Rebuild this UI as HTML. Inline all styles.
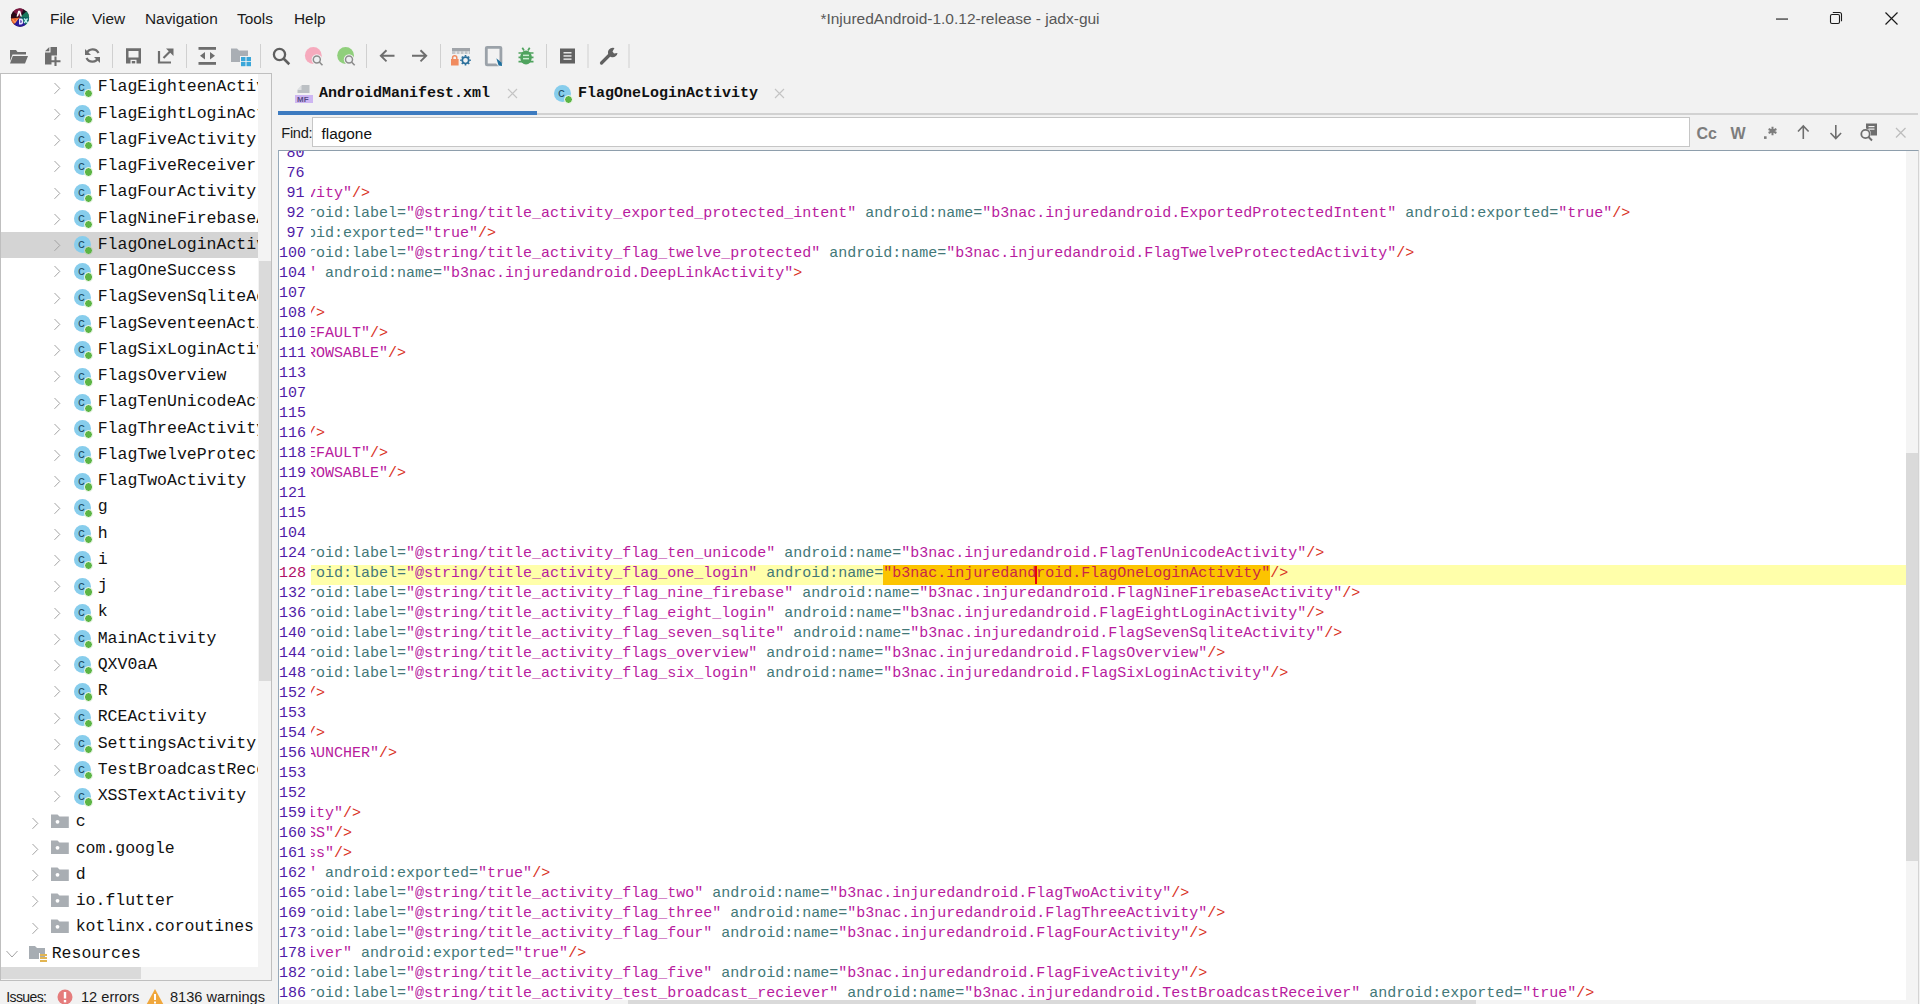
<!DOCTYPE html>
<html><head><meta charset="utf-8"><title>jadx-gui</title>
<style>
*{margin:0;padding:0;box-sizing:border-box}
html,body{width:1920px;height:1004px;overflow:hidden;background:#f2f2f2;font-family:"Liberation Sans",sans-serif;color:#1a1a1a}
.abs{position:absolute}
/* title bar */
#title{position:absolute;left:0;top:0;width:1920px;height:37px;background:#f2f2f2}
.menu{position:absolute;top:10px;font-size:15.4px;color:#1b1b1b;line-height:17px;white-space:nowrap}
#wtitle{position:absolute;top:10px;left:0;width:1920px;text-align:center;font-size:15.5px;color:#585858;line-height:17px}
/* toolbar */
.tb{position:absolute;top:44px}
.sep{position:absolute;top:44px;width:1px;height:24px;background:#cfcfcf}
/* tree */
#tree{position:absolute;left:0;top:73px;width:272px;height:908px;border:1px solid #bfbfbf;background:#fff;overflow:hidden}
#treein{position:absolute;left:0;top:0;width:257px;height:893px;overflow:hidden;background:#fff}
.row{position:absolute;left:0;width:257px;height:26.25px}
.row.sel{background:#d4d4d4}
.chev{position:absolute;top:6px}
.cico{position:absolute;top:4.3px;width:19px;height:19px;margin-left:-0.5px}
.cico b{position:absolute;left:0;top:0;width:17px;height:17px;border-radius:50%;background:#87cdec;color:#24506a;font:normal 13.5px/15.5px "Liberation Sans",sans-serif;text-align:center;font-weight:normal;padding-right:1.5px}
.cico em{position:absolute;left:10.1px;top:9.9px;width:9.3px;height:9.3px;border-radius:50%;background:#5db545;border:1px solid #fff}
.sel .cico em{border-color:#d4d4d4}
.pico{position:absolute;top:5px}
.tn{position:absolute;top:-0.2px;margin-left:-0.3px;font-family:"Liberation Mono",monospace;font-size:16.5px;line-height:26px;color:#111;white-space:nowrap}
#tvs{position:absolute;left:257px;top:0;width:13px;height:893px;background:#f3f3f3}
#tvs i{position:absolute;left:1px;top:187px;width:12px;height:420px;background:#dadada}
#ths{position:absolute;left:0;top:893px;width:257px;height:13px;background:#f3f3f3}
#ths i{position:absolute;left:0;top:0;width:140px;height:12px;background:#dadada}
#tcorner{position:absolute;left:257px;top:893px;width:13px;height:13px;background:#f3f3f3}
/* tabs */
.tab{position:absolute;top:83.5px;font-family:"Liberation Mono",monospace;font-weight:bold;font-size:15px;line-height:20px;color:#111;white-space:nowrap}
.tclose{position:absolute;top:88px}
#tabline{position:absolute;left:537px;top:113px;width:1381px;height:2px;background:#d2d2d2}
#tabsel{position:absolute;left:278px;top:111px;width:259px;height:4px;background:#3d7bc0}
/* find bar */
#findlbl{position:absolute;left:281.3px;top:124.8px;letter-spacing:-0.3px;font-size:14.6px;line-height:17px;color:#1b1b1b}
#findin{position:absolute;left:312px;top:117px;width:1378px;height:30px;background:#fff;border:1px solid #c6c6c6}
#findin span{position:absolute;left:8.5px;top:7.2px;font-size:15.4px;line-height:17px;color:#111}
.fi{position:absolute;top:124px}
/* code */
#code{position:absolute;left:278px;top:150px;width:1641px;height:860px;border:1px solid #d4d4d4;border-top-color:#8e9eac;border-left-color:#97aabb;background:#fff;overflow:hidden}
#gut{position:absolute;left:0;top:0;width:31px;height:860px;overflow:hidden}
.ln{position:absolute;left:0;width:25.5px;height:20px;margin-top:-1.5px;text-align:right;font-family:"Liberation Mono",monospace;font-size:15px;line-height:20px;color:#4f1aa6;white-space:nowrap}
.ln.cur{color:#b01068}
#txt{position:absolute;left:32px;top:0;width:1595px;height:860px;overflow:hidden}
.cl{position:absolute;left:0;width:1595px;height:20px}
.tx{position:absolute;left:-3.95px;top:-1.5px;width:1700px;height:20px;font-family:"Liberation Mono",monospace;font-size:15px;line-height:20px;white-space:pre}
.mbg{position:absolute;top:0;height:20px;background:#fcc400}
.caret{position:absolute;top:1px;width:2px;height:18px;background:#e8000b;z-index:2}
.cl.cur{background:#ffffaa}
.a{color:#437878}
.s{color:#b81b9e}
.d{color:#d9321f}
.m{color:#c92646}
#vs{position:absolute;left:1627px;top:0;width:13px;height:860px;background:#f4f4f4}
#vs i{position:absolute;left:0;top:302px;width:12px;height:408px;background:#dadada}
#hs{position:absolute;left:0;top:849px;width:1627px;height:12px;background:#f4f4f4}
#hs i{position:absolute;left:349px;top:0;width:848px;height:12px;background:#dadada}
/* status */
#status{position:absolute;left:0;top:981px;width:278px;height:23px;background:#f2f2f2}
.st{position:absolute;top:8.3px;font-size:14.6px;line-height:17px;color:#1b1b1b;white-space:nowrap}

</style></head>
<body>
<div id="title">
  <svg class="abs" style="left:10px;top:8px" width="20" height="20" viewBox="0 0 20 20">
    <circle cx="10" cy="9.6" r="9.1" fill="#1c0f1e"/>
    <path d="M10 9.6 L3 3.5 A9.1 9.1 0 0 1 13.5 1.2 Z" fill="#7a1840"/>
    <path d="M10 9.6 L1 10.5 A9.1 9.1 0 0 1 3 3.5 Z" fill="#2a0a18"/>
    <path d="M10 9.6 L4 16.2 A9.1 9.1 0 0 1 1 10.5 Z" fill="#e8622a"/>
    <path d="M10 9.6 L16.5 3.3 A9.1 9.1 0 0 1 19 9 Z" fill="#17795c"/>
    <path d="M10 9.6 L19 9 A9.1 9.1 0 0 1 15.5 17 Z" fill="#0e6e6a"/>
    <path d="M10 9.6 L15.5 17 A9.1 9.1 0 0 1 4 16.2 Z" fill="#2a1a9a"/>
    <path d="M8.2 2.8 L10.2 2.8 L12 8.5 L10.5 8.5 L9.3 5 L8 8.5 L6.5 8.5 Z" fill="#fff"/>
    <path d="M9 10.5 H11 Q13.2 10.5 13.2 13.5 Q13.2 16.5 11 16.5 H9 Z M10.4 12 V15 Q11.7 15 11.7 13.5 Q11.7 12 10.4 12 Z" fill="#e9e3ff" fill-rule="evenodd"/>
    <path d="M14.2 10.5 L17.5 15 M17.5 10.5 L14.2 15" stroke="#bff5ef" stroke-width="1.3"/>
    <path d="M2.5 11 L5 14.5 L7.5 11" fill="none" stroke="#ff9a60" stroke-width="1.2"/>
  </svg>
  <div class="menu" style="left:50px">File</div>
  <div class="menu" style="left:92px">View</div>
  <div class="menu" style="left:145px">Navigation</div>
  <div class="menu" style="left:237px">Tools</div>
  <div class="menu" style="left:294px">Help</div>
  <div id="wtitle">*InjuredAndroid-1.0.12-release - jadx-gui</div>
  <svg class="abs" style="left:1775px;top:12px" width="14" height="14" viewBox="0 0 14 14"><rect x="1" y="6.5" width="12" height="1.1" fill="#1a1a1a"/></svg>
  <svg class="abs" style="left:1829px;top:11px" width="14" height="14" viewBox="0 0 14 14"><rect x="1.5" y="3.5" width="9" height="9" rx="1.5" fill="none" stroke="#1a1a1a" stroke-width="1.1"/><path d="M3.8 1.5 H10.5 Q12.5 1.5 12.5 3.5 V10.2" fill="none" stroke="#1a1a1a" stroke-width="1.1"/></svg>
  <svg class="abs" style="left:1884px;top:11px" width="15" height="15" viewBox="0 0 15 15"><path d="M1.5 1.5 L13.5 13.5 M13.5 1.5 L1.5 13.5" stroke="#1a1a1a" stroke-width="1.2"/></svg>
</div>

<!-- toolbar -->
<svg class="abs" style="left:0;top:40px" width="640" height="32" viewBox="0 40 640 32">
  <!-- open folder -->
  <path d="M10 50 H16 L17.5 52 H26 V54.5 H12.5 L10 61 Z" fill="#6e6e6e"/>
  <path d="M12.8 56 H28 L25 63.5 H10 Z" fill="#6e6e6e"/>
  <!-- add file -->
  <path d="M50.5 47 H57 V55.5 H51.5 V64.5 H45 V52.5 H50.5 Z" fill="#6e6e6e"/>
  <path d="M45 51.3 L49.3 47 V51.3 Z" fill="#6e6e6e"/>
  <path d="M55.5 56.5 V66 M50.8 61.2 H60.5" stroke="#6e6e6e" stroke-width="2.1"/>
  <rect x="71" y="44" width="1" height="24" fill="#d0d0d0"/>
  <!-- sync -->
  <path d="M98.5 53 A6.5 6.5 0 0 0 86.6 53.5" fill="none" stroke="#6e6e6e" stroke-width="2.2"/>
  <path d="M85 49 L85 55 L91 55 Z" fill="#6e6e6e"/>
  <path d="M86.5 58 A6.5 6.5 0 0 0 98.4 57.5" fill="none" stroke="#6e6e6e" stroke-width="2.2"/>
  <path d="M100 63 L100 57 L94 57 Z" fill="#6e6e6e"/>
  <rect x="112" y="44" width="1" height="24" fill="#d0d0d0"/>
  <!-- save -->
  <path d="M126 48.2 H141 V63.4 H126 Z M128.5 51 V57.5 H138.5 V51 Z M130.5 59.8 V63.4 H136.5 V59.8 Z" fill="#6e6e6e" fill-rule="evenodd"/>
  <rect x="131.8" y="61" width="3.4" height="2.4" fill="#6e6e6e"/>
  <!-- export -->
  <path d="M159 51 V62.5 H171" fill="none" stroke="#6e6e6e" stroke-width="2.2"/>
  <path d="M163.5 58 L171 50.5" stroke="#6e6e6e" stroke-width="2.2"/>
  <path d="M166 48.5 H173.5 V56 Z" fill="#6e6e6e"/>
  <rect x="186" y="44" width="1" height="24" fill="#d0d0d0"/>
  <!-- unfold -->
  <rect x="198.5" y="47" width="17.5" height="2.8" fill="#6e6e6e"/>
  <rect x="198.5" y="62" width="17.5" height="2.8" fill="#6e6e6e"/>
  <path d="M205 52 V59.5 L200 55.8 Z M210 52 V59.5 L215 55.8 Z" fill="#6e6e6e"/>
  <!-- folder grid -->
  <path d="M231 48.5 H237 L239 50.5 H248 V62 H231 Z" fill="#a9aeb4"/>
  <rect x="240" y="56" width="12" height="11" fill="#f2f2f2"/>
  <rect x="241" y="57" width="4.5" height="4.2" fill="#3aa6d9"/><rect x="246.5" y="57" width="4.5" height="4.2" fill="#3aa6d9"/>
  <rect x="241" y="62" width="4.5" height="4.2" fill="#3aa6d9"/><rect x="246.5" y="62" width="4.5" height="4.2" fill="#3aa6d9"/>
  <rect x="260" y="44" width="1" height="24" fill="#d0d0d0"/>
  <!-- search -->
  <circle cx="279.5" cy="54.5" r="5.6" fill="none" stroke="#5f5f5f" stroke-width="2.3"/>
  <path d="M283.5 58.5 L289.3 64.2" stroke="#5f5f5f" stroke-width="2.6"/>
  <!-- pink -->
  <circle cx="313.3" cy="55.5" r="8.4" fill="#f6aabd"/>
  <circle cx="316.8" cy="59.5" r="5.2" fill="#f2f2f2"/>
  <circle cx="316.8" cy="59.5" r="3.5" fill="#eef0f2" stroke="#8c8c8c" stroke-width="1.5"/>
  <path d="M319.3 62 L322.5 65.2" stroke="#8c8c8c" stroke-width="1.6"/>
  <!-- green -->
  <circle cx="345.6" cy="55.5" r="8.4" fill="#90cf7c"/>
  <circle cx="349" cy="59.5" r="5.2" fill="#f2f2f2"/>
  <circle cx="349" cy="59.5" r="3.5" fill="#eef0f2" stroke="#8c8c8c" stroke-width="1.5"/>
  <path d="M351.5 62 L354.7 65.2" stroke="#8c8c8c" stroke-width="1.6"/>
  <rect x="366" y="44" width="1" height="24" fill="#d0d0d0"/>
  <!-- back / fwd -->
  <path d="M380.8 55.8 H394.5 M386.5 50.2 L380.8 55.8 L386.5 61.4" fill="none" stroke="#6e6e6e" stroke-width="1.9"/>
  <path d="M412 55.8 H426.2 M420.5 50.2 L426.2 55.8 L420.5 61.4" fill="none" stroke="#6e6e6e" stroke-width="1.9"/>
  <rect x="440" y="44" width="1" height="24" fill="#d0d0d0"/>
  <!-- lock gear -->
  <rect x="452" y="48" width="18" height="3" fill="#a0a4a9"/>
  <rect x="452" y="51" width="18" height="3" fill="#c3c6c9"/>
  <rect x="455.5" y="51.5" width="1.2" height="2.5" fill="#f2f2f2"/><rect x="459.5" y="51.5" width="1.2" height="2.5" fill="#f2f2f2"/><rect x="463.5" y="51.5" width="1.2" height="2.5" fill="#f2f2f2"/><rect x="467.5" y="51.5" width="1.2" height="2.5" fill="#f2f2f2"/>
  <rect x="450" y="54" width="22" height="13" fill="#f2f2f2"/>
  <path d="M452.6 59.5 V57.8 A2.1 2.1 0 0 1 456.8 57.8 V59.5" fill="none" stroke="#f08b5f" stroke-width="1.5"/>
  <rect x="451" y="59" width="7.6" height="6.5" fill="#f08b5f"/>
  <circle cx="465.5" cy="60.3" r="3.2" fill="none" stroke="#2b6f9b" stroke-width="1.7"/>
  <path d="M465.5 55 V56.5 M465.5 64.1 V65.6 M460.2 60.3 H461.7 M469.3 60.3 H470.8 M461.8 56.6 L462.8 57.6 M468.2 63 L469.2 64 M461.8 64 L462.8 63 M468.2 57.6 L469.2 56.6" stroke="#2b6f9b" stroke-width="1.6"/>
  <!-- tablet -->
  <rect x="486.3" y="47.3" width="14.6" height="17.6" rx="0.8" fill="none" stroke="#9ba2a9" stroke-width="2.8"/>
  <path d="M495.5 57.5 L503 64 L503 67 L499 67 L495.5 62.5 Z" fill="#f2f2f2"/>
  <path d="M496.3 58.3 L501.8 62.8 L502 66 L498.6 65.6 Z" fill="#1f6f9c"/>
  <!-- bug -->
  <ellipse cx="526" cy="57.5" rx="5.8" ry="7" fill="#4fa35e"/>
  <path d="M518.5 53 H533.5 M518.5 57.3 H533.5 M518.5 61.6 H533.5 M522.3 47.8 L524 50.5 M529.7 47.8 L528 50.5" stroke="#4fa35e" stroke-width="1.7"/>
  <rect x="523" y="54.6" width="6" height="1.5" fill="#c9eccf"/>
  <rect x="523" y="57.9" width="6" height="1.5" fill="#c9eccf"/>
  <rect x="546" y="44" width="1" height="24" fill="#d0d0d0"/>
  <!-- list doc -->
  <rect x="560" y="48.5" width="15" height="15" fill="#616161"/>
  <rect x="563.5" y="52" width="8" height="1.5" fill="#e6e6e6"/>
  <rect x="563.5" y="55.2" width="8" height="1.5" fill="#e6e6e6"/>
  <rect x="563.5" y="58.4" width="8" height="1.5" fill="#e6e6e6"/>
  <rect x="587.5" y="44" width="1" height="24" fill="#d0d0d0"/>
  <!-- wrench -->
  <path d="M601.5 63 L610 54.5" stroke="#616161" stroke-width="3.2" stroke-linecap="round"/>
  <path d="M614.5 48 A4.8 4.8 0 1 0 617.5 53 L614 53.5 L612.5 51.5 Z" fill="#616161"/>
  <rect x="628.5" y="44" width="1" height="24" fill="#d0d0d0"/>
</svg>

<!-- tree -->
<div id="tree">
  <div id="treein">
<div class="row" style="top:0.50px"><svg class="chev" style="left:51px" width="10" height="14" viewBox="0 0 10 14"><path d="M2.5 2 L7.8 7.4 L2.5 12.8" fill="none" stroke="#a3a3a3" stroke-width="1"/></svg><span class="cico" style="left:73px"><b>c</b><em></em></span><span class="tn" style="left:97px">FlagEighteenActivity</span></div>
<div class="row" style="top:26.75px"><svg class="chev" style="left:51px" width="10" height="14" viewBox="0 0 10 14"><path d="M2.5 2 L7.8 7.4 L2.5 12.8" fill="none" stroke="#a3a3a3" stroke-width="1"/></svg><span class="cico" style="left:73px"><b>c</b><em></em></span><span class="tn" style="left:97px">FlagEightLoginActivity</span></div>
<div class="row" style="top:53.00px"><svg class="chev" style="left:51px" width="10" height="14" viewBox="0 0 10 14"><path d="M2.5 2 L7.8 7.4 L2.5 12.8" fill="none" stroke="#a3a3a3" stroke-width="1"/></svg><span class="cico" style="left:73px"><b>c</b><em></em></span><span class="tn" style="left:97px">FlagFiveActivity</span></div>
<div class="row" style="top:79.25px"><svg class="chev" style="left:51px" width="10" height="14" viewBox="0 0 10 14"><path d="M2.5 2 L7.8 7.4 L2.5 12.8" fill="none" stroke="#a3a3a3" stroke-width="1"/></svg><span class="cico" style="left:73px"><b>c</b><em></em></span><span class="tn" style="left:97px">FlagFiveReceiver</span></div>
<div class="row" style="top:105.50px"><svg class="chev" style="left:51px" width="10" height="14" viewBox="0 0 10 14"><path d="M2.5 2 L7.8 7.4 L2.5 12.8" fill="none" stroke="#a3a3a3" stroke-width="1"/></svg><span class="cico" style="left:73px"><b>c</b><em></em></span><span class="tn" style="left:97px">FlagFourActivity</span></div>
<div class="row" style="top:131.75px"><svg class="chev" style="left:51px" width="10" height="14" viewBox="0 0 10 14"><path d="M2.5 2 L7.8 7.4 L2.5 12.8" fill="none" stroke="#a3a3a3" stroke-width="1"/></svg><span class="cico" style="left:73px"><b>c</b><em></em></span><span class="tn" style="left:97px">FlagNineFirebaseActivity</span></div>
<div class="row sel" style="top:158.00px"><svg class="chev" style="left:51px" width="10" height="14" viewBox="0 0 10 14"><path d="M2.5 2 L7.8 7.4 L2.5 12.8" fill="none" stroke="#a3a3a3" stroke-width="1"/></svg><span class="cico" style="left:73px"><b>c</b><em></em></span><span class="tn" style="left:97px">FlagOneLoginActivity</span></div>
<div class="row" style="top:184.25px"><svg class="chev" style="left:51px" width="10" height="14" viewBox="0 0 10 14"><path d="M2.5 2 L7.8 7.4 L2.5 12.8" fill="none" stroke="#a3a3a3" stroke-width="1"/></svg><span class="cico" style="left:73px"><b>c</b><em></em></span><span class="tn" style="left:97px">FlagOneSuccess</span></div>
<div class="row" style="top:210.50px"><svg class="chev" style="left:51px" width="10" height="14" viewBox="0 0 10 14"><path d="M2.5 2 L7.8 7.4 L2.5 12.8" fill="none" stroke="#a3a3a3" stroke-width="1"/></svg><span class="cico" style="left:73px"><b>c</b><em></em></span><span class="tn" style="left:97px">FlagSevenSqliteActivity</span></div>
<div class="row" style="top:236.75px"><svg class="chev" style="left:51px" width="10" height="14" viewBox="0 0 10 14"><path d="M2.5 2 L7.8 7.4 L2.5 12.8" fill="none" stroke="#a3a3a3" stroke-width="1"/></svg><span class="cico" style="left:73px"><b>c</b><em></em></span><span class="tn" style="left:97px">FlagSeventeenActivity</span></div>
<div class="row" style="top:263.00px"><svg class="chev" style="left:51px" width="10" height="14" viewBox="0 0 10 14"><path d="M2.5 2 L7.8 7.4 L2.5 12.8" fill="none" stroke="#a3a3a3" stroke-width="1"/></svg><span class="cico" style="left:73px"><b>c</b><em></em></span><span class="tn" style="left:97px">FlagSixLoginActivity</span></div>
<div class="row" style="top:289.25px"><svg class="chev" style="left:51px" width="10" height="14" viewBox="0 0 10 14"><path d="M2.5 2 L7.8 7.4 L2.5 12.8" fill="none" stroke="#a3a3a3" stroke-width="1"/></svg><span class="cico" style="left:73px"><b>c</b><em></em></span><span class="tn" style="left:97px">FlagsOverview</span></div>
<div class="row" style="top:315.50px"><svg class="chev" style="left:51px" width="10" height="14" viewBox="0 0 10 14"><path d="M2.5 2 L7.8 7.4 L2.5 12.8" fill="none" stroke="#a3a3a3" stroke-width="1"/></svg><span class="cico" style="left:73px"><b>c</b><em></em></span><span class="tn" style="left:97px">FlagTenUnicodeActivity</span></div>
<div class="row" style="top:341.75px"><svg class="chev" style="left:51px" width="10" height="14" viewBox="0 0 10 14"><path d="M2.5 2 L7.8 7.4 L2.5 12.8" fill="none" stroke="#a3a3a3" stroke-width="1"/></svg><span class="cico" style="left:73px"><b>c</b><em></em></span><span class="tn" style="left:97px">FlagThreeActivity</span></div>
<div class="row" style="top:368.00px"><svg class="chev" style="left:51px" width="10" height="14" viewBox="0 0 10 14"><path d="M2.5 2 L7.8 7.4 L2.5 12.8" fill="none" stroke="#a3a3a3" stroke-width="1"/></svg><span class="cico" style="left:73px"><b>c</b><em></em></span><span class="tn" style="left:97px">FlagTwelveProtectedActivity</span></div>
<div class="row" style="top:394.25px"><svg class="chev" style="left:51px" width="10" height="14" viewBox="0 0 10 14"><path d="M2.5 2 L7.8 7.4 L2.5 12.8" fill="none" stroke="#a3a3a3" stroke-width="1"/></svg><span class="cico" style="left:73px"><b>c</b><em></em></span><span class="tn" style="left:97px">FlagTwoActivity</span></div>
<div class="row" style="top:420.50px"><svg class="chev" style="left:51px" width="10" height="14" viewBox="0 0 10 14"><path d="M2.5 2 L7.8 7.4 L2.5 12.8" fill="none" stroke="#a3a3a3" stroke-width="1"/></svg><span class="cico" style="left:73px"><b>c</b><em></em></span><span class="tn" style="left:97px">g</span></div>
<div class="row" style="top:446.75px"><svg class="chev" style="left:51px" width="10" height="14" viewBox="0 0 10 14"><path d="M2.5 2 L7.8 7.4 L2.5 12.8" fill="none" stroke="#a3a3a3" stroke-width="1"/></svg><span class="cico" style="left:73px"><b>c</b><em></em></span><span class="tn" style="left:97px">h</span></div>
<div class="row" style="top:473.00px"><svg class="chev" style="left:51px" width="10" height="14" viewBox="0 0 10 14"><path d="M2.5 2 L7.8 7.4 L2.5 12.8" fill="none" stroke="#a3a3a3" stroke-width="1"/></svg><span class="cico" style="left:73px"><b>c</b><em></em></span><span class="tn" style="left:97px">i</span></div>
<div class="row" style="top:499.25px"><svg class="chev" style="left:51px" width="10" height="14" viewBox="0 0 10 14"><path d="M2.5 2 L7.8 7.4 L2.5 12.8" fill="none" stroke="#a3a3a3" stroke-width="1"/></svg><span class="cico" style="left:73px"><b>c</b><em></em></span><span class="tn" style="left:97px">j</span></div>
<div class="row" style="top:525.50px"><svg class="chev" style="left:51px" width="10" height="14" viewBox="0 0 10 14"><path d="M2.5 2 L7.8 7.4 L2.5 12.8" fill="none" stroke="#a3a3a3" stroke-width="1"/></svg><span class="cico" style="left:73px"><b>c</b><em></em></span><span class="tn" style="left:97px">k</span></div>
<div class="row" style="top:551.75px"><svg class="chev" style="left:51px" width="10" height="14" viewBox="0 0 10 14"><path d="M2.5 2 L7.8 7.4 L2.5 12.8" fill="none" stroke="#a3a3a3" stroke-width="1"/></svg><span class="cico" style="left:73px"><b>c</b><em></em></span><span class="tn" style="left:97px">MainActivity</span></div>
<div class="row" style="top:578.00px"><svg class="chev" style="left:51px" width="10" height="14" viewBox="0 0 10 14"><path d="M2.5 2 L7.8 7.4 L2.5 12.8" fill="none" stroke="#a3a3a3" stroke-width="1"/></svg><span class="cico" style="left:73px"><b>c</b><em></em></span><span class="tn" style="left:97px">QXV0aA</span></div>
<div class="row" style="top:604.25px"><svg class="chev" style="left:51px" width="10" height="14" viewBox="0 0 10 14"><path d="M2.5 2 L7.8 7.4 L2.5 12.8" fill="none" stroke="#a3a3a3" stroke-width="1"/></svg><span class="cico" style="left:73px"><b>c</b><em></em></span><span class="tn" style="left:97px">R</span></div>
<div class="row" style="top:630.50px"><svg class="chev" style="left:51px" width="10" height="14" viewBox="0 0 10 14"><path d="M2.5 2 L7.8 7.4 L2.5 12.8" fill="none" stroke="#a3a3a3" stroke-width="1"/></svg><span class="cico" style="left:73px"><b>c</b><em></em></span><span class="tn" style="left:97px">RCEActivity</span></div>
<div class="row" style="top:656.75px"><svg class="chev" style="left:51px" width="10" height="14" viewBox="0 0 10 14"><path d="M2.5 2 L7.8 7.4 L2.5 12.8" fill="none" stroke="#a3a3a3" stroke-width="1"/></svg><span class="cico" style="left:73px"><b>c</b><em></em></span><span class="tn" style="left:97px">SettingsActivity</span></div>
<div class="row" style="top:683.00px"><svg class="chev" style="left:51px" width="10" height="14" viewBox="0 0 10 14"><path d="M2.5 2 L7.8 7.4 L2.5 12.8" fill="none" stroke="#a3a3a3" stroke-width="1"/></svg><span class="cico" style="left:73px"><b>c</b><em></em></span><span class="tn" style="left:97px">TestBroadcastReceiver</span></div>
<div class="row" style="top:709.25px"><svg class="chev" style="left:51px" width="10" height="14" viewBox="0 0 10 14"><path d="M2.5 2 L7.8 7.4 L2.5 12.8" fill="none" stroke="#a3a3a3" stroke-width="1"/></svg><span class="cico" style="left:73px"><b>c</b><em></em></span><span class="tn" style="left:97px">XSSTextActivity</span></div>
<div class="row" style="top:735.50px"><svg class="chev" style="left:29px" width="10" height="14" viewBox="0 0 10 14"><path d="M2.5 2 L7.8 7.4 L2.5 12.8" fill="none" stroke="#a3a3a3" stroke-width="1"/></svg><svg class="pico" style="left:49px;top:3.5px" width="20" height="16" viewBox="0 0 20 16"><path d="M1 1.5 H7.5 L9.5 3.5 H18.8 V15 H1 Z" fill="#a9aeb3"/><circle cx="7.5" cy="8.8" r="1.9" fill="#fff"/></svg><span class="tn" style="left:75px">c</span></div>
<div class="row" style="top:761.75px"><svg class="chev" style="left:29px" width="10" height="14" viewBox="0 0 10 14"><path d="M2.5 2 L7.8 7.4 L2.5 12.8" fill="none" stroke="#a3a3a3" stroke-width="1"/></svg><svg class="pico" style="left:49px;top:3.5px" width="20" height="16" viewBox="0 0 20 16"><path d="M1 1.5 H7.5 L9.5 3.5 H18.8 V15 H1 Z" fill="#a9aeb3"/><circle cx="7.5" cy="8.8" r="1.9" fill="#fff"/></svg><span class="tn" style="left:75px">com.google</span></div>
<div class="row" style="top:788.00px"><svg class="chev" style="left:29px" width="10" height="14" viewBox="0 0 10 14"><path d="M2.5 2 L7.8 7.4 L2.5 12.8" fill="none" stroke="#a3a3a3" stroke-width="1"/></svg><svg class="pico" style="left:49px;top:3.5px" width="20" height="16" viewBox="0 0 20 16"><path d="M1 1.5 H7.5 L9.5 3.5 H18.8 V15 H1 Z" fill="#a9aeb3"/><circle cx="7.5" cy="8.8" r="1.9" fill="#fff"/></svg><span class="tn" style="left:75px">d</span></div>
<div class="row" style="top:814.25px"><svg class="chev" style="left:29px" width="10" height="14" viewBox="0 0 10 14"><path d="M2.5 2 L7.8 7.4 L2.5 12.8" fill="none" stroke="#a3a3a3" stroke-width="1"/></svg><svg class="pico" style="left:49px;top:3.5px" width="20" height="16" viewBox="0 0 20 16"><path d="M1 1.5 H7.5 L9.5 3.5 H18.8 V15 H1 Z" fill="#a9aeb3"/><circle cx="7.5" cy="8.8" r="1.9" fill="#fff"/></svg><span class="tn" style="left:75px">io.flutter</span></div>
<div class="row" style="top:840.50px"><svg class="chev" style="left:29px" width="10" height="14" viewBox="0 0 10 14"><path d="M2.5 2 L7.8 7.4 L2.5 12.8" fill="none" stroke="#a3a3a3" stroke-width="1"/></svg><svg class="pico" style="left:49px;top:3.5px" width="20" height="16" viewBox="0 0 20 16"><path d="M1 1.5 H7.5 L9.5 3.5 H18.8 V15 H1 Z" fill="#a9aeb3"/><circle cx="7.5" cy="8.8" r="1.9" fill="#fff"/></svg><span class="tn" style="left:75px">kotlinx.coroutines</span></div>
<div class="row" style="top:866.75px"><svg class="chev" style="left:4px;top:8px" width="14" height="10" viewBox="0 0 14 10"><path d="M1.5 2 L7 8 L12.5 2" fill="none" stroke="#a3a3a3" stroke-width="1"/></svg><svg class="pico" style="left:27px;top:4px" width="22" height="20" viewBox="0 0 22 20"><path d="M1 1 H7 L9 3 H17 V14 H1 Z" fill="#a7adb3"/><rect x="12" y="9" width="7" height="2" fill="#e2b552"/><rect x="12" y="12" width="7" height="2" fill="#e2b552"/><rect x="12" y="15" width="7" height="2" fill="#e2b552"/><rect x="11" y="8" width="1" height="10" fill="#fff"/></svg><span class="tn" style="left:51px">Resources</span></div>
  </div>
  <div id="tvs"><i></i></div>
  <div id="ths"><i></i></div>
  <div id="tcorner"></div>
</div>

<!-- tabs -->
<svg class="abs" style="left:295px;top:84px" width="19" height="20" viewBox="0 0 19 20">
  <path d="M2.5 6 L7 1 H14.5 V9 H2.5 Z" fill="#bcc0c4"/>
  <path d="M2.5 6 L6.5 1.5 V6 Z" fill="#dfe1e3"/>
  <rect x="0" y="11" width="18" height="8" fill="#cdb6f2"/>
  <text x="2" y="18.3" font-family="Liberation Sans" font-weight="bold" font-size="8" fill="#5a4d86">MF</text>
</svg>
<div class="tab" style="left:319px">AndroidManifest.xml</div>
<svg class="tclose" style="left:507px" width="11" height="11" viewBox="0 0 11 11"><path d="M1 1 L10 10 M10 1 L1 10" stroke="#c4c4c4" stroke-width="1.15"/></svg>
<span class="cico" style="left:554px;top:85px"><b>c</b><em></em></span>
<div class="tab" style="left:578px">FlagOneLoginActivity</div>
<svg class="tclose" style="left:774px" width="11" height="11" viewBox="0 0 11 11"><path d="M1 1 L10 10 M10 1 L1 10" stroke="#c4c4c4" stroke-width="1.15"/></svg>
<div id="tabline"></div>
<div id="tabsel"></div>

<!-- find bar -->
<div id="findlbl">Find:</div>
<div id="findin"><span>flagone</span></div>
<svg class="abs" style="left:1690px;top:118px" width="230" height="30" viewBox="1690 118 230 30">
  <text x="1696.5" y="138.5" font-family="Liberation Sans" font-weight="bold" font-size="16" fill="#7d7d7d">Cc</text>
  <text x="1730.5" y="138.5" font-family="Liberation Sans" font-weight="bold" font-size="16" fill="#7d7d7d">W</text>
  <rect x="1764" y="136.3" width="2.6" height="2.6" fill="#7d7d7d"/>
  <path d="M1772.5 126.8 V135.2 M1768.6 129 L1776.4 133 M1768.6 133 L1776.4 129" stroke="#7d7d7d" stroke-width="2"/>
  <path d="M1803.3 139 V126.5 M1798 131.5 L1803.3 126 L1808.6 131.5" fill="none" stroke="#6e6e6e" stroke-width="1.6"/>
  <path d="M1835.8 125 V138.5 M1830.5 133 L1835.8 138.5 L1841.1 133" fill="none" stroke="#6e6e6e" stroke-width="1.6"/>
  <rect x="1866" y="123.5" width="11" height="12" fill="#6e6e6e"/>
  <rect x="1868.5" y="126" width="6" height="1.2" fill="#f2f2f2"/><rect x="1868.5" y="128.5" width="6" height="1.2" fill="#f2f2f2"/>
  <circle cx="1865.5" cy="134" r="5.5" fill="#f2f2f2"/>
  <circle cx="1865.5" cy="134" r="4.2" fill="none" stroke="#6e6e6e" stroke-width="1.8"/>
  <path d="M1868.5 137 L1872 140.5" stroke="#6e6e6e" stroke-width="1.9"/>
  <path d="M1896 128 L1905.5 137.5 M1905.5 128 L1896 137.5" stroke="#bdbdbd" stroke-width="1.3"/>
</svg>

<!-- code -->
<div id="code">
  <div id="gut">
<div class="ln" style="top:-6px">80</div>
<div class="ln" style="top:14px">76</div>
<div class="ln" style="top:34px">91</div>
<div class="ln" style="top:54px">92</div>
<div class="ln" style="top:74px">97</div>
<div class="ln" style="top:94px">100</div>
<div class="ln" style="top:114px">104</div>
<div class="ln" style="top:134px">107</div>
<div class="ln" style="top:154px">108</div>
<div class="ln" style="top:174px">110</div>
<div class="ln" style="top:194px">111</div>
<div class="ln" style="top:214px">113</div>
<div class="ln" style="top:234px">107</div>
<div class="ln" style="top:254px">115</div>
<div class="ln" style="top:274px">116</div>
<div class="ln" style="top:294px">118</div>
<div class="ln" style="top:314px">119</div>
<div class="ln" style="top:334px">121</div>
<div class="ln" style="top:354px">115</div>
<div class="ln" style="top:374px">104</div>
<div class="ln" style="top:394px">124</div>
<div class="ln cur" style="top:414px">128</div>
<div class="ln" style="top:434px">132</div>
<div class="ln" style="top:454px">136</div>
<div class="ln" style="top:474px">140</div>
<div class="ln" style="top:494px">144</div>
<div class="ln" style="top:514px">148</div>
<div class="ln" style="top:534px">152</div>
<div class="ln" style="top:554px">153</div>
<div class="ln" style="top:574px">154</div>
<div class="ln" style="top:594px">156</div>
<div class="ln" style="top:614px">153</div>
<div class="ln" style="top:634px">152</div>
<div class="ln" style="top:654px">159</div>
<div class="ln" style="top:674px">160</div>
<div class="ln" style="top:694px">161</div>
<div class="ln" style="top:714px">162</div>
<div class="ln" style="top:734px">165</div>
<div class="ln" style="top:754px">169</div>
<div class="ln" style="top:774px">173</div>
<div class="ln" style="top:794px">178</div>
<div class="ln" style="top:814px">182</div>
<div class="ln" style="top:834px">186</div>
  </div>
  <div id="txt">
<div class="cl" style="top:-6px"><div class="tx"></div></div>
<div class="cl" style="top:14px"><div class="tx"></div></div>
<div class="cl" style="top:34px"><div class="tx"><span class="s">vity"</span><span class="d">/&gt;</span></div></div>
<div class="cl" style="top:54px"><div class="tx"><span class="a">roid:label=</span><span class="s">"@string/title_activity_exported_protected_intent"</span><span class="a"> android:name=</span><span class="s">"b3nac.injuredandroid.ExportedProtectedIntent"</span><span class="a"> android:exported=</span><span class="s">"true"</span><span class="d">/&gt;</span></div></div>
<div class="cl" style="top:74px"><div class="tx"><span class="a">oid:exported=</span><span class="s">"true"</span><span class="d">/&gt;</span></div></div>
<div class="cl" style="top:94px"><div class="tx"><span class="a">roid:label=</span><span class="s">"@string/title_activity_flag_twelve_protected"</span><span class="a"> android:name=</span><span class="s">"b3nac.injuredandroid.FlagTwelveProtectedActivity"</span><span class="d">/&gt;</span></div></div>
<div class="cl" style="top:114px"><div class="tx"><span class="s">"</span><span class="a"> android:name=</span><span class="s">"b3nac.injuredandroid.DeepLinkActivity"</span><span class="d">&gt;</span></div></div>
<div class="cl" style="top:134px"><div class="tx"></div></div>
<div class="cl" style="top:154px"><div class="tx"><span class="d">/&gt;</span></div></div>
<div class="cl" style="top:174px"><div class="tx"><span class="s">EFAULT"</span><span class="d">/&gt;</span></div></div>
<div class="cl" style="top:194px"><div class="tx"><span class="s">ROWSABLE"</span><span class="d">/&gt;</span></div></div>
<div class="cl" style="top:214px"><div class="tx"></div></div>
<div class="cl" style="top:234px"><div class="tx"></div></div>
<div class="cl" style="top:254px"><div class="tx"></div></div>
<div class="cl" style="top:274px"><div class="tx"><span class="d">/&gt;</span></div></div>
<div class="cl" style="top:294px"><div class="tx"><span class="s">EFAULT"</span><span class="d">/&gt;</span></div></div>
<div class="cl" style="top:314px"><div class="tx"><span class="s">ROWSABLE"</span><span class="d">/&gt;</span></div></div>
<div class="cl" style="top:334px"><div class="tx"></div></div>
<div class="cl" style="top:354px"><div class="tx"></div></div>
<div class="cl" style="top:374px"><div class="tx"></div></div>
<div class="cl" style="top:394px"><div class="tx"><span class="a">roid:label=</span><span class="s">"@string/title_activity_flag_ten_unicode"</span><span class="a"> android:name=</span><span class="s">"b3nac.injuredandroid.FlagTenUnicodeActivity"</span><span class="d">/&gt;</span></div></div>
<div class="cl cur" style="top:414px"><div class="mbg" style="left:572.05px;width:387.00px"></div><div class="caret" style="left:724.05px"></div><div class="tx"><span class="a">roid:label=</span><span class="s">"@string/title_activity_flag_one_login"</span><span class="a"> android:name=</span><span class="m">"b3nac.injuredandroid.FlagOneLoginActivity"</span><span class="d">/&gt;</span></div></div>
<div class="cl" style="top:434px"><div class="tx"><span class="a">roid:label=</span><span class="s">"@string/title_activity_flag_nine_firebase"</span><span class="a"> android:name=</span><span class="s">"b3nac.injuredandroid.FlagNineFirebaseActivity"</span><span class="d">/&gt;</span></div></div>
<div class="cl" style="top:454px"><div class="tx"><span class="a">roid:label=</span><span class="s">"@string/title_activity_flag_eight_login"</span><span class="a"> android:name=</span><span class="s">"b3nac.injuredandroid.FlagEightLoginActivity"</span><span class="d">/&gt;</span></div></div>
<div class="cl" style="top:474px"><div class="tx"><span class="a">roid:label=</span><span class="s">"@string/title_activity_flag_seven_sqlite"</span><span class="a"> android:name=</span><span class="s">"b3nac.injuredandroid.FlagSevenSqliteActivity"</span><span class="d">/&gt;</span></div></div>
<div class="cl" style="top:494px"><div class="tx"><span class="a">roid:label=</span><span class="s">"@string/title_activity_flags_overview"</span><span class="a"> android:name=</span><span class="s">"b3nac.injuredandroid.FlagsOverview"</span><span class="d">/&gt;</span></div></div>
<div class="cl" style="top:514px"><div class="tx"><span class="a">roid:label=</span><span class="s">"@string/title_activity_flag_six_login"</span><span class="a"> android:name=</span><span class="s">"b3nac.injuredandroid.FlagSixLoginActivity"</span><span class="d">/&gt;</span></div></div>
<div class="cl" style="top:534px"><div class="tx"><span class="d">/&gt;</span></div></div>
<div class="cl" style="top:554px"><div class="tx"></div></div>
<div class="cl" style="top:574px"><div class="tx"><span class="d">/&gt;</span></div></div>
<div class="cl" style="top:594px"><div class="tx"><span class="s">AUNCHER"</span><span class="d">/&gt;</span></div></div>
<div class="cl" style="top:614px"><div class="tx"></div></div>
<div class="cl" style="top:634px"><div class="tx"></div></div>
<div class="cl" style="top:654px"><div class="tx"><span class="s">ity"</span><span class="d">/&gt;</span></div></div>
<div class="cl" style="top:674px"><div class="tx"><span class="s">SS"</span><span class="d">/&gt;</span></div></div>
<div class="cl" style="top:694px"><div class="tx"><span class="s">ss"</span><span class="d">/&gt;</span></div></div>
<div class="cl" style="top:714px"><div class="tx"><span class="s">"</span><span class="a"> android:exported=</span><span class="s">"true"</span><span class="d">/&gt;</span></div></div>
<div class="cl" style="top:734px"><div class="tx"><span class="a">roid:label=</span><span class="s">"@string/title_activity_flag_two"</span><span class="a"> android:name=</span><span class="s">"b3nac.injuredandroid.FlagTwoActivity"</span><span class="d">/&gt;</span></div></div>
<div class="cl" style="top:754px"><div class="tx"><span class="a">roid:label=</span><span class="s">"@string/title_activity_flag_three"</span><span class="a"> android:name=</span><span class="s">"b3nac.injuredandroid.FlagThreeActivity"</span><span class="d">/&gt;</span></div></div>
<div class="cl" style="top:774px"><div class="tx"><span class="a">roid:label=</span><span class="s">"@string/title_activity_flag_four"</span><span class="a"> android:name=</span><span class="s">"b3nac.injuredandroid.FlagFourActivity"</span><span class="d">/&gt;</span></div></div>
<div class="cl" style="top:794px"><div class="tx"><span class="s">iver"</span><span class="a"> android:exported=</span><span class="s">"true"</span><span class="d">/&gt;</span></div></div>
<div class="cl" style="top:814px"><div class="tx"><span class="a">roid:label=</span><span class="s">"@string/title_activity_flag_five"</span><span class="a"> android:name=</span><span class="s">"b3nac.injuredandroid.FlagFiveActivity"</span><span class="d">/&gt;</span></div></div>
<div class="cl" style="top:834px"><div class="tx"><span class="a">roid:label=</span><span class="s">"@string/title_activity_test_broadcast_reciever"</span><span class="a"> android:name=</span><span class="s">"b3nac.injuredandroid.TestBroadcastReceiver"</span><span class="a"> android:exported=</span><span class="s">"true"</span><span class="d">/&gt;</span></div></div>
  </div>
  <div id="vs"><i></i></div>
  <div id="hs"><i></i></div>
</div>

<!-- status -->
<div id="status">
  <div class="st" style="left:6.2px;letter-spacing:-0.6px;font-size:14px">Issues:</div>
  <svg class="abs" style="left:57px;top:8px" width="16" height="16" viewBox="0 0 16 16"><circle cx="8" cy="8" r="7.5" fill="#e57c7c"/><rect x="6.8" y="3" width="2.4" height="6.5" fill="#fff"/><rect x="6.8" y="11" width="2.4" height="2.4" fill="#fff"/></svg>
  <div class="st" style="left:81px">12 errors</div>
  <svg class="abs" style="left:146px;top:7px" width="18" height="17" viewBox="0 0 18 17"><path d="M9 1 L17.5 16.5 H0.5 Z" fill="#f0a73c"/><rect x="8" y="6" width="2" height="6" fill="#fff"/><rect x="8" y="13.5" width="2" height="2" fill="#fff"/></svg>
  <div class="st" style="left:170px">8136 warnings</div>
</div>

</body></html>
